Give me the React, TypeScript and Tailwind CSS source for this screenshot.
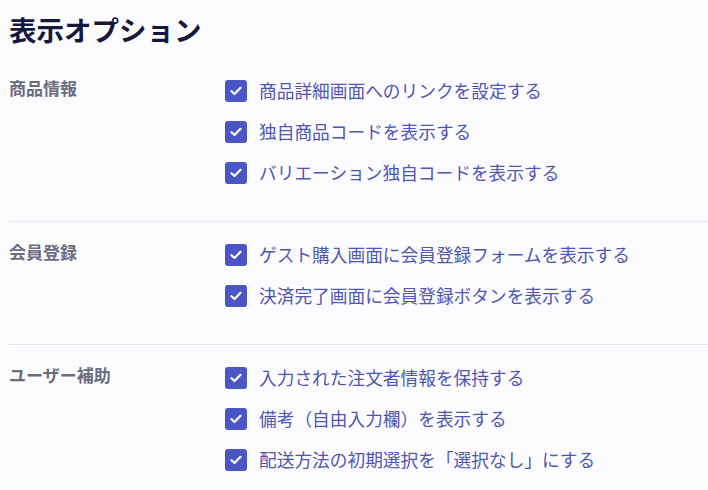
import React from "react";

const sections = [
  {
    label: "商品情報",
    items: [
      "商品詳細画面へのリンクを設定する",
      "独自商品コードを表示する",
      "バリエーション独自コードを表示する",
    ],
  },
  {
    label: "会員登録",
    items: [
      "ゲスト購入画面に会員登録フォームを表示する",
      "決済完了画面に会員登録ボタンを表示する",
    ],
  },
  {
    label: "ユーザー補助",
    items: [
      "入力された注文者情報を保持する",
      "備考（自由入力欄）を表示する",
      "配送方法の初期選択を「選択なし」にする",
    ],
  },
];

function Check() {
  return (
    <span className="flex h-[22px] w-[22px] shrink-0 items-center justify-center rounded-[3px] bg-[#4a55c6]">
      <svg width="12" height="10" viewBox="0 0 12 10" fill="none">
        <path d="M1.5 5.2 L4.5 8 L10.5 1.8" stroke="white" strokeWidth="2.2" strokeLinecap="round" strokeLinejoin="round" />
      </svg>
    </span>
  );
}

export default function App() {
  return (
    <div
      className="min-h-[490px] w-[708px] bg-[#fcfcfe] pl-[7px]"
      style={{ fontFamily: '"Noto Sans CJK JP", "Noto Sans", sans-serif' }}
    >
      <h1 className="mb-[9px] pl-[2px] pt-[9px] text-[27.5px] font-bold leading-[40px] text-[#15173c]">
        表示オプション
      </h1>
      {sections.map((s, i) => (
        <div
          key={s.label}
          className={`grid grid-cols-[218px_1fr] pt-[12px] ${i < sections.length - 1 ? "border-b border-[#e6e6ee] pb-[28px]" : "pb-[10px]"}`}
        >
          <div className="pl-[2px] pt-[5px] text-[17px] font-bold leading-[25px] text-[#6b6c80]">
            {s.label}
          </div>
          <div className="flex flex-col">
            {s.items.map((t) => (
              <div key={t} className="flex h-[41px] items-center gap-[12px]">
                <Check />
                <span className="text-[17.7px] leading-[25px] text-[#4f55b3]">{t}</span>
              </div>
            ))}
          </div>
        </div>
      ))}
    </div>
  );
}
